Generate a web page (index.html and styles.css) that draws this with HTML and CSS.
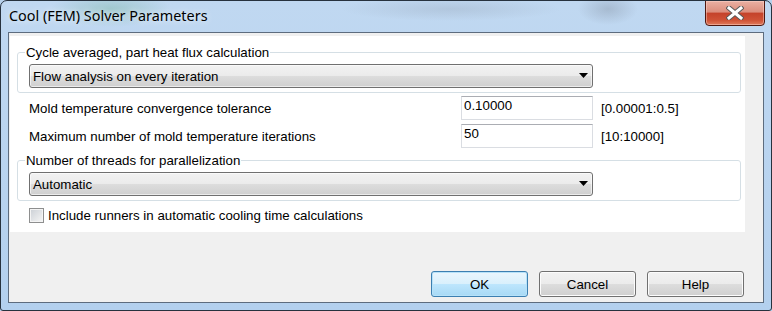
FILE: index.html
```html
<!DOCTYPE html>
<html>
<head>
  <title>Cool (FEM) Solver Parameters</title>
  <link rel="stylesheet" href="styles.css">
</head>
<body>
  <div class="window">
    <div class="titlebar">
      <span class="title">Cool (FEM) Solver Parameters</span>
      <button class="close-btn" title="Close">
        <svg width="18" height="14" viewBox="0 0 18 14">
          <path d="M3 2 L15 12 M15 2 L3 12" stroke="#5a5a5a" stroke-width="5" stroke-linecap="square"/>
          <path d="M3 2 L15 12 M15 2 L3 12" stroke="#fff" stroke-width="3" stroke-linecap="square"/>
        </svg>
      </button>
    </div>

    <div class="client">
      <div class="panel">
        <fieldset class="group">
          <legend>Cycle averaged, part heat flux calculation</legend>
          <div class="combo">
            <span>Flow analysis on every iteration</span>
            <svg class="arrow" width="9" height="5" viewBox="0 0 9 5"><path d="M0 0 H9 L4.5 5 Z" fill="#000"/></svg>
          </div>
        </fieldset>

        <div class="field">
          <label for="tolerance">Mold temperature convergence tolerance</label>
          <input type="text" id="tolerance" value="0.10000">
          <span class="range">[0.00001:0.5]</span>
        </div>

        <div class="field">
          <label for="iterations">Maximum number of mold temperature iterations</label>
          <input type="text" id="iterations" value="50">
          <span class="range">[10:10000]</span>
        </div>

        <fieldset class="group group-threads">
          <legend>Number of threads for parallelization</legend>
          <div class="combo">
            <span>Automatic</span>
            <svg class="arrow" width="9" height="5" viewBox="0 0 9 5"><path d="M0 0 H9 L4.5 5 Z" fill="#000"/></svg>
          </div>
        </fieldset>

        <label class="check">
          <span class="box"></span>
          Include runners in automatic cooling time calculations
        </label>
      </div>

      <div class="buttons">
        <button class="btn btn-default">OK</button>
        <button class="btn">Cancel</button>
        <button class="btn">Help</button>
      </div>
    </div>
  </div>
</body>
</html>
```

FILE: styles.css
```css
* {
  box-sizing: border-box;
}

body {
  margin: 0;
  font-family: "Liberation Sans", Arial, sans-serif;
  font-size: 13.3px;
  color: #000;
  background-color: #b7d1ec;
}

.window {
  width: 772px;
  height: 311px;
  display: flex;
  flex-direction: column;
  border: 1px solid #27323e;
  border-radius: 7px 7px 3px 3px;
  overflow: hidden;
  background:
    radial-gradient(ellipse 60px 18px at 110px 8px, rgba(100, 170, 140, 0.35), transparent),
    radial-gradient(ellipse 110px 12px at 450px 8px, rgba(120, 130, 145, 0.2), transparent),
    radial-gradient(ellipse 30px 16px at 607px 8px, rgba(110, 120, 135, 0.3), transparent),
    linear-gradient(#c0d8f1, #b3d0ee);
}

.titlebar {
  height: 31px;
  display: flex;
  align-items: flex-start;
}

.title {
  margin: 5px 0 0 8px;
  font-family: "Noto Sans", sans-serif;
  font-size: 14.4px;
  text-shadow: 0 0 6px rgba(255, 255, 255, 0.9);
}

.close-btn {
  margin: -1px 6px 0 auto;
  width: 60px;
  height: 26px;
  padding: 0;
  display: flex;
  align-items: center;
  justify-content: center;
  border: 1px solid #501810;
  border-radius: 0 0 4px 4px;
  background: linear-gradient(#eab0a3 0%, #dc8e7d 45%, #c5432b 52%, #cf5236 80%, #df7a5c 100%);
  box-shadow: inset 0 0 0 1px rgba(255, 220, 210, 0.45);
}

.client {
  flex: 1;
  margin: 0 7px 7px;
  display: flex;
  flex-direction: column;
  border: 1px solid #5d6c7e;
  background-color: #f0f0f0;
}

.panel {
  width: 735px;
  height: 196px;
  margin: 3px 0 0 1px;
  background-color: #fff;
  overflow: hidden;
}

.group {
  margin: 9px 4px 0 7px;
  padding: 4px 0 4px 11px;
  border: 1px solid #d5dfe5;
  border-radius: 3px;
}

.group legend {
  padding: 0 1px;
  margin-left: -4px;
  line-height: 15px;
}

.group-threads {
  margin-top: 5px;
}

.combo {
  width: 564px;
  height: 24px;
  display: flex;
  align-items: center;
  justify-content: space-between;
  padding: 0 4px 0 3px;
  border: 1px solid #707070;
  border-radius: 3px;
  background: linear-gradient(#f2f2f2 0%, #ebebeb 50%, #dddddd 50%, #cfcfcf 100%);
  box-shadow: inset 0 0 0 1px rgba(255, 255, 255, 0.6);
}

.arrow {
  margin-bottom: 1px;
}

.field {
  height: 24px;
  margin: 3px 0 0 19px;
  display: flex;
  align-items: center;
}

.field + .field {
  margin-top: 4px;
}

.field label {
  width: 432px;
}

.field input {
  width: 132px;
  height: 24px;
  padding: 0 2px 5px;
  font-family: "Liberation Sans", Arial, sans-serif;
  font-size: 13.3px;
  color: #000;
  border: 1px solid #dadde2;
  border-top-color: #abadb3;
  outline: none;
}

.range {
  margin-left: 8px;
}

.check {
  margin: 7px 0 0 19px;
  display: flex;
  align-items: center;
}

.check .box {
  width: 15px;
  height: 15px;
  margin-right: 4px;
  border: 1px solid #8e8f8f;
  background: linear-gradient(135deg, #cbcfd5, #f6f6f6);
  box-shadow: inset 0 0 0 1px #f4f4f4;
}

.buttons {
  margin-top: auto;
  padding: 0 19px 5px 0;
  display: flex;
  justify-content: flex-end;
  gap: 11px;
}

.btn {
  width: 97px;
  height: 26px;
  font-family: "Liberation Sans", Arial, sans-serif;
  font-size: 13.3px;
  color: #000;
  border: 1px solid #707070;
  border-radius: 3px;
  background: linear-gradient(#f2f2f2 0%, #ebebeb 50%, #dddddd 50%, #cfcfcf 100%);
  box-shadow: inset 0 0 0 1px #fcfcfc;
}

.btn-default {
  border-color: #3c7fb1;
  background: linear-gradient(#eaf6fd 0%, #d9f0fc 50%, #bee6fd 50%, #a7d9f5 100%);
  box-shadow: inset 0 0 0 1px #b7e2f9;
}
```
